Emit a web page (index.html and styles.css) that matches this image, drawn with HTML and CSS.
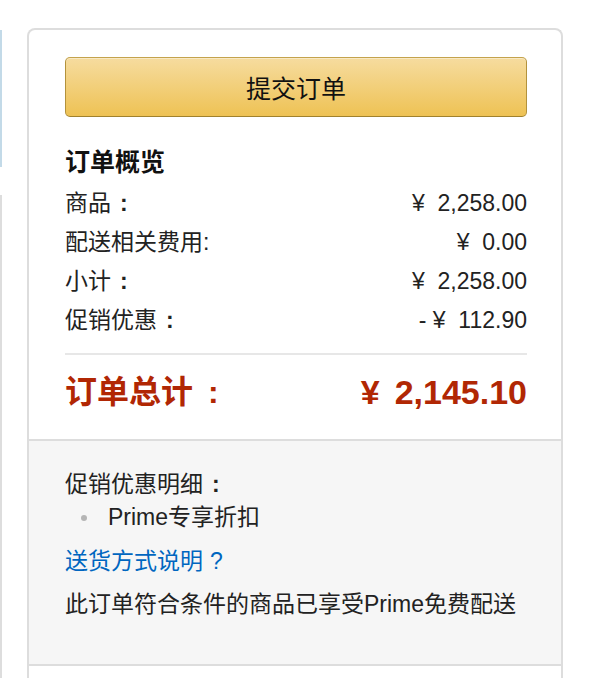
FILE: index.html
```html
<!DOCTYPE html>
<html lang="zh-CN">
<head>
<meta charset="utf-8">
<title>订单概览</title>
<link rel="stylesheet" href="styles.css">
</head>
<body>
<div class="page">
  <div class="side">
    <div class="side-top"></div>
    <div class="side-box"></div>
  </div>
  <div class="card">
    <div class="summary">
      <button class="place-order">提交订单</button>
      <h3 class="title">订单概览</h3>
      <div class="row"><span>商品<span class="colon">:</span></span><span>¥&nbsp;&nbsp;2,258.00</span></div>
      <div class="row"><span>配送相关费用:</span><span>¥&nbsp;&nbsp;0.00</span></div>
      <div class="row"><span>小计<span class="colon">:</span></span><span>¥&nbsp;&nbsp;2,258.00</span></div>
      <div class="row"><span>促销优惠<span class="colon">:</span></span><span>-&nbsp;¥&nbsp;&nbsp;112.90</span></div>
      <div class="total"><span>订单总计<span class="colon total-colon">:</span></span><span class="total-amount"><span class="cur">¥</span>2,145.10</span></div>
    </div>
    <div class="promo">
      <div class="promo-title">促销优惠明细<span class="colon">:</span></div>
      <ul class="promo-list">
        <li>Prime专享折扣</li>
      </ul>
      <a class="ship-link" href="#">送货方式说明<span class="qmark">?</span></a>
      <p class="prime-note">此订单符合条件的商品已享受Prime免费配送</p>
    </div>
    <div class="rest"></div>
  </div>
</div>
</body>
</html>
```

FILE: styles.css
```css
html, body {
  margin: 0;
  padding: 0;
  background: #fff;
  overflow: hidden;
}
body {
  font-family: "Liberation Sans", Arial, "Noto Sans CJK SC", sans-serif;
  color: #111;
  font-size: 23px;
}
.colon {
  padding-left: 9px;
  font-weight: bold;
}
.total-colon {
  padding-left: 15px;
}
.qmark {
  padding-left: 7px;
}
.page {
  display: flex;
  align-items: flex-start;
}
.side {
  width: 2px;
  display: flex;
  flex-direction: column;
}
.side-top {
  margin-top: 30px;
  height: 137px;
  background: #c3dae8;
}
.side-box {
  margin-top: 28px;
  height: 500px;
  border-right: 2px solid #dddddd;
  box-sizing: border-box;
}
.card {
  margin-left: 25px;
  margin-top: 28px;
  width: 536px;
  box-sizing: border-box;
  border: 2px solid #dddddd;
  border-bottom: none;
  border-radius: 8px 8px 0 0;
}
.summary {
  padding: 27px 34px 25px 36px;
}
.place-order {
  display: block;
  width: 100%;
  height: 60px;
  margin: 0;
  padding: 0;
  font-family: inherit;
  font-size: 25px;
  color: #111;
  background: linear-gradient(to bottom, #f6dc9f, #eec254);
  border: 1.5px solid;
  border-color: #c4a34c #b3923c #a0812d;
  border-radius: 5px;
  box-shadow: inset 0 1px 0 rgba(255, 255, 255, 0.4);
}
.title {
  margin: 28px 0 5px;
  font-size: 25px;
  line-height: 34px;
  font-weight: bold;
}
.row {
  display: flex;
  justify-content: space-between;
  line-height: 39px;
  height: 39px;
  color: #222;
}
.total {
  display: flex;
  justify-content: space-between;
  align-items: center;
  height: 44px;
  margin-top: 13px;
  padding-top: 15px;
  border-top: 2px solid #e7e7e7;
  color: #b12704;
  font-weight: bold;
  font-size: 32px;
  line-height: 44px;
}
.total-amount {
  font-size: 34px;
  line-height: 44px;
}
.cur {
  margin-right: 15px;
}
.promo {
  background: #f6f6f6;
  border-top: 2px solid #dddddd;
  border-bottom: 2px solid #dddddd;
  padding: 27px 34px 43px 36px;
  line-height: 33px;
  color: #222;
}
.promo-title {
  height: 33px;
}
.promo-list {
  list-style: none;
  margin: 0;
  padding: 0;
}
.promo-list li {
  display: flex;
  align-items: center;
  height: 33px;
}
.promo-list li::before {
  content: "";
  width: 6px;
  height: 6px;
  border-radius: 50%;
  background: #b5b5b5;
  margin-left: 16px;
  margin-right: 21px;
}
.ship-link {
  display: block;
  margin-top: 11px;
  color: #0066c0;
  text-decoration: none;
}
.prime-note {
  margin: 10px 0 0;
}
.rest {
  height: 80px;
}
```
